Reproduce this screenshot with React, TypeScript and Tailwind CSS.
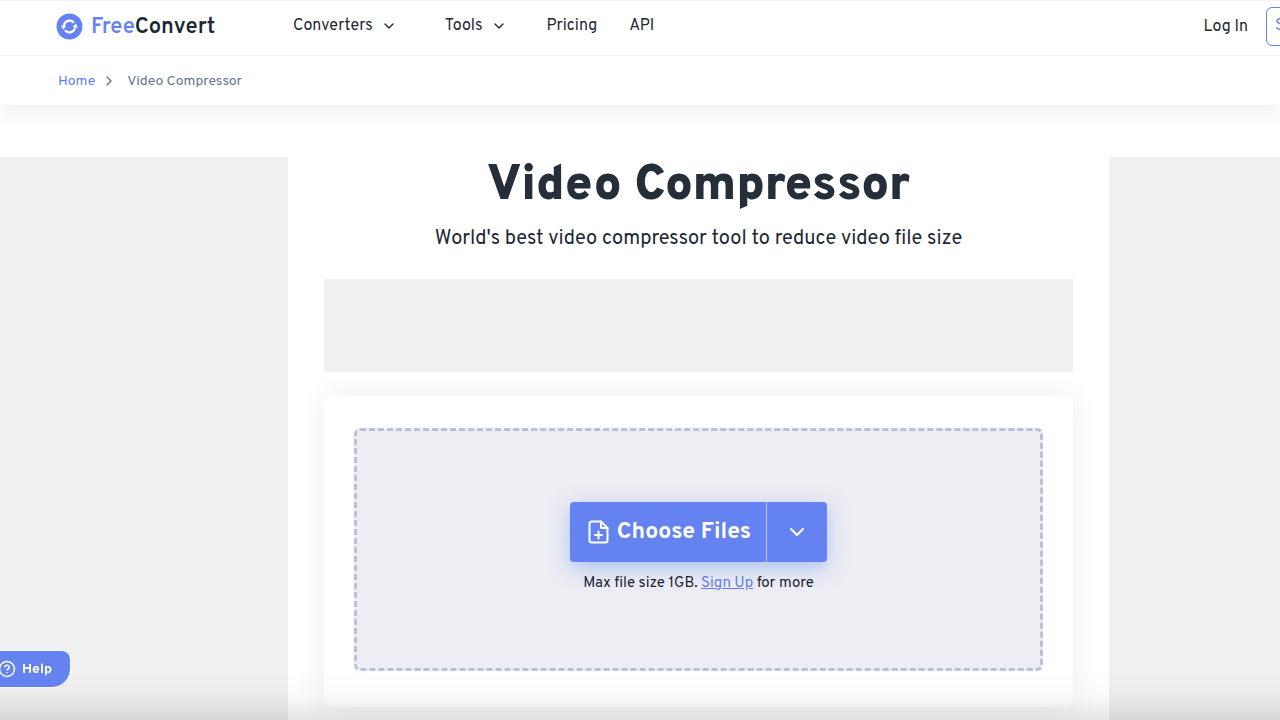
import React from 'react';
import { ChevronDown, ChevronRight, CircleHelp } from 'lucide-react';

const App: React.FC = () => {
  return (
    <div className="min-h-screen flex flex-col overflow-hidden bg-white text-[#1b2733] font-['Overpass','Roboto',sans-serif]">

      {/* Header */}
      <header className="relative z-10 flex items-center h-14 pl-14 pb-1 border-y border-[#f3f3f5] bg-white overflow-hidden">
        <a href="#" className="flex items-center gap-2 w-[237px] shrink-0 text-[22px] leading-7 font-semibold">
          <LogoMark />
          <span className="pt-1"><span className="text-[#6583f0]">Free</span>Convert</span>
        </a>
        <nav className="flex items-center text-base leading-6 whitespace-nowrap">
          <NavMenu label="Converters" className="mr-12" />
          <NavMenu label="Tools" className="mr-10" />
          <a href="#" className="mr-8">Pricing</a>
          <a href="#">API</a>
        </nav>
        <div className="flex items-center gap-[18px] ml-auto -mr-[74px] whitespace-nowrap text-base leading-6">
          <a href="#" className="pt-0.5">Log In</a>
          <button type="button" className="h-[39px] w-[88px] pl-2 rounded-md border border-[#6583f0] text-[#6583f0] text-left">Sign Up</button>
        </div>
      </header>

      {/* Breadcrumb */}
      <nav aria-label="Breadcrumb" className="flex items-center h-[49px] px-[58px] text-sm leading-5 text-[#64748b] shadow-[0_0_28px_4px_rgba(0,0,0,0.08)]">
        <a href="#" className="pt-0.5 text-[#5f7cf0]">Home</a>
        <ChevronRight size={16} className="ml-1.5 mr-2.5" />
        <span className="pt-0.5">Video Compressor</span>
      </nav>

      {/* Content between the two ad columns */}
      <div className="flex flex-1 pt-13">
        <aside className="w-72 shrink-0 bg-[#f0f0f0]"></aside>

        <main className="flex-1 min-w-0 px-9 pb-3 text-center">
          <h1 className="pt-1 text-[49px] leading-[52px] font-black text-[#242f3a]">Video Compressor</h1>
          <p className="mt-3 text-xl leading-7">World's best video compressor tool to reduce video file size</p>
          <div className="mt-[26px] h-[93px] bg-[#f0f0f0]"></div>

          <section className="mt-6 px-[30px] pt-8 pb-9 rounded-lg bg-white shadow-[0_0_32px_rgba(0,0,0,0.07)]">
            <div className="flex flex-col items-center pt-[71px] pb-[72px] rounded-md border-3 border-dashed border-[#b9c0dc] bg-[#eeedf4]">
              <div className="flex h-[60px] rounded bg-[#6583f0] text-white shadow-[0_6px_20px_rgba(101,150,240,0.5)]">
                <button type="button" className="flex items-center gap-2 pl-[18px] pr-[15px] text-[23px] leading-7 font-bold">
                  <FilePlusIcon />
                  <span className="pt-0.5">Choose Files</span>
                </button>
                <button type="button" aria-label="More sources" className="flex items-center justify-center w-[61px] border-l border-[#b5c4fa]">
                  <ChevronDown size={24} />
                </button>
              </div>
              <p className="mt-2.5 text-[15px] leading-6">
                Max file size 1GB. <a href="#" className="text-[#5f7cf0] underline">Sign Up</a> for more
              </p>
            </div>
          </section>
        </main>

        <aside className="w-[171px] shrink-0 bg-[#f0f0f0]"></aside>
      </div>

      <div className="fixed inset-x-0 bottom-0 h-12 pointer-events-none border-b border-black/10 bg-linear-to-b from-transparent via-black/2 to-black/10"></div>

      {/* Help launcher, tucked into the left edge */}
      <button type="button" className="fixed -left-2 bottom-[33px] flex items-center gap-1.5 h-9 pl-1.5 pr-[18px] rounded-lg rounded-br-[18px] bg-[#6583f0] text-white text-sm font-bold outline-1 outline-white/70">
        <CircleHelp size={18} />
        <span className="pt-0.5">Help</span>
      </button>
    </div>
  );
};

const NavMenu = ({ label, className }: { label: string; className: string }) => (
  <button type="button" className={`flex items-center gap-2 ${className}`}>
    {label}
    <ChevronDown size={16} />
  </button>
);

const LogoMark = () => (
  <svg width="27" height="27" viewBox="0 0 27 27" fill="none">
    <circle cx="13.5" cy="13.5" r="13" fill="#6583f0" />
    <path d="M8 12.500a5.700 5.700 0 0 1 10-2.800" stroke="#fff" strokeWidth="2.200" />
    <path d="M19 14.500a5.700 5.700 0 0 1-10 2.800" stroke="#fff" strokeWidth="2.200" />
    <path d="M5 12.200l5.200 .8-3 3.400z M22 14.800l-5.200-.8 3-3.400z" fill="#fff" />
  </svg>
);

const FilePlusIcon = () => (
  <svg width="21" height="24" viewBox="0 0 21 24" fill="none" stroke="currentColor" strokeWidth="2" strokeLinecap="round" strokeLinejoin="round">
    <path d="M13 1.500H3.500a2 2 0 0 0-2 2v17a2 2 0 0 0 2 2h14a2 2 0 0 0 2-2V8z" />
    <path d="M13 1.500V8h6.500" />
    <path d="M10.500 11.500v7M7 15h7" />
  </svg>
);

export default App;
